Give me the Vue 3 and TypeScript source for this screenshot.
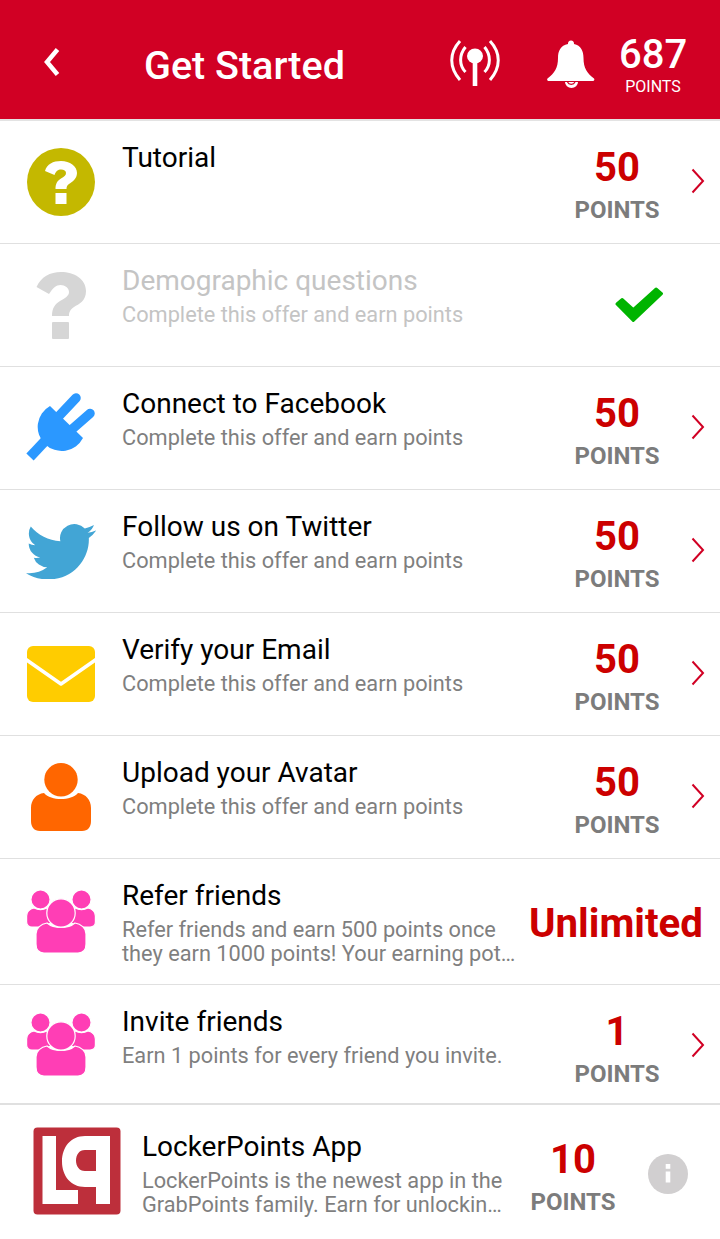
<script setup lang="ts">
type Offer = {
  title: string
  lines?: string[]
  icon: string
  points?: string
  done?: boolean
  wide?: boolean
  tall?: boolean
  short?: boolean
}

const earn = ['Complete this offer and earn points']

const offers: Offer[] = [
  { title: 'Tutorial', icon: 'help', points: '50' },
  { title: 'Demographic questions', lines: earn, icon: 'question', done: true },
  { title: 'Connect to Facebook', lines: earn, icon: 'plug', points: '50' },
  { title: 'Follow us on Twitter', lines: earn, icon: 'twitter', points: '50' },
  { title: 'Verify your Email', lines: earn, icon: 'mail', points: '50' },
  { title: 'Upload your Avatar', lines: earn, icon: 'user', points: '50' },
  {
    title: 'Refer friends',
    lines: ['Refer friends and earn 500 points once', 'they earn 1000 points! Your earning pot…'],
    icon: 'group',
    wide: true,
    tall: true,
  },
  { title: 'Invite friends', lines: ['Earn 1 points for every friend you invite.'], icon: 'group', points: '1', short: true },
]
</script>

<template>
  <div class="page">
    <header class="topbar">
      <svg class="back" width="20" height="30" viewBox="0 0 20 30">
        <path d="M15.500 2.500 L5 15 L15.500 27.500" fill="none" stroke="#fff" stroke-width="4.500" />
      </svg>
      <h1 class="heading">Get Started</h1>
      <svg class="signal" width="50" height="50" viewBox="0 0 50 50">
        <g fill="none" stroke="#fff" stroke-width="3">
          <path d="M10 2 C-1 14 -1 28 10 41" />
          <path d="M15.500 8 C9 16 9 26 15.500 33" />
          <path d="M34.500 8 C41 16 41 26 34.500 33" />
          <path d="M40 2 C51 14 51 28 40 41" />
        </g>
        <ellipse cx="25" cy="17" rx="8" ry="7.500" fill="#fff" />
        <rect x="22.700" y="20" width="4.600" height="27" fill="#fff" />
      </svg>
      <svg class="bell" width="50" height="48" viewBox="0 0 50 48">
        <path
          d="M25 0.500 a3 3 0 0 1 3 3.500 C35 5.500 37.500 11 37.500 18 C37.500 28 41 33 48 38.500 a1.500 1.500 0 0 1 -1 2.500 H2.500 a1.500 1.500 0 0 1 -1 -2.500 C8.500 33 12 28 12 18 C12 11 14.500 5.500 22 4 A3 3 0 0 1 25 0.500 Z"
          fill="#fff"
        />
        <path d="M19 42 a6.500 6 0 0 0 13 0 Z" fill="#fff" />
        <path d="M21.500 42 a4 3.500 0 0 0 7.500 0" fill="none" stroke="#d10024" stroke-width="1.200" />
      </svg>
      <div class="balance">
        <div class="balance-num">687</div>
        <div class="balance-label">POINTS</div>
      </div>
    </header>

    <ul class="list">
      <li
        v-for="offer in offers"
        :key="offer.title"
        class="row"
        :class="{ done: offer.done, tall: offer.tall, short: offer.short }"
      >
        <div class="icon">
          <svg v-if="offer.icon === 'help'" width="70" height="70" viewBox="0 0 70 70">
            <circle cx="35" cy="35" r="34" fill="#c4b800" />
            <path
              d="M19 24 C21 17 27 14 35 14 C44 14 51 19 51 26 C51 32 46 35 43 37 C41 38.500 40.500 39.500 40.500 42 H29.500 C29.500 37 31 34 35 31.500 C38 29.500 40 28.500 40 26 C40 24 38 22.500 35 22.500 C32 22.500 30 24 28.500 28 Z"
              fill="#fff"
            />
            <rect x="29.500" y="46" width="11" height="11" fill="#fff" />
          </svg>
          <svg v-else-if="offer.icon === 'question'" width="70" height="70" viewBox="0 0 70 70">
            <path
              d="M10.500 17 C15 7 24 2 35 2 C48 2 60 9 60 21 C60 31 53 34 48 37 C44 40 43 42 43 46 H26 C26 38 29 34 34 31 C39 28 43 26 43 22 C43 18 39 15 34.500 15 C30 15 27 18 23 24 Z"
              fill="#d6d6d6"
            />
            <rect x="26" y="52" width="17" height="17" rx="1" fill="#d6d6d6" />
          </svg>
          <svg v-else-if="offer.icon === 'plug'" width="70" height="70" viewBox="0 0 70 70">
            <g fill="none" stroke="#2b98ff">
              <path d="M50 5 L33 23" stroke-width="9.500" stroke-linecap="round" />
              <path d="M64 20.500 L44 38" stroke-width="9.500" stroke-linecap="round" />
              <path d="M20 47 L4 64" stroke-width="10" />
            </g>
            <path d="M24 13 L57 45 A24 24 0 1 1 24 13 Z" fill="#2b98ff" />
          </svg>
          <svg v-else-if="offer.icon === 'twitter'" class="bird" width="70" height="56" viewBox="0 1.900 24 19.700" preserveAspectRatio="none">
            <path
              d="M23.953 4.570a10 10 0 01-2.825.775 4.958 4.958 0 002.163-2.723c-.951.555-2.005.959-3.127 1.184a4.920 4.920 0 00-8.384 4.482C7.690 8.095 4.067 6.130 1.640 3.162a4.822 4.822 0 00-.666 2.475c0 1.710.870 3.213 2.188 4.096a4.904 4.904 0 01-2.228-.616v.060a4.923 4.923 0 003.946 4.827 4.996 4.996 0 01-2.212.085 4.936 4.936 0 004.604 3.417 9.867 9.867 0 01-6.102 2.105c-.390 0-.779-.023-1.170-.067a13.995 13.995 0 007.557 2.209c9.053 0 13.998-7.496 13.998-13.985 0-.210 0-.420-.015-.630A9.935 9.935 0 0024 4.590z"
              fill="#42a5d5"
            />
          </svg>
          <svg v-else-if="offer.icon === 'mail'" width="70" height="56" viewBox="0 0 70 56">
            <rect x="1" y="0" width="68" height="56" rx="6" fill="#ffcc00" />
            <path d="M0 13.500 L35 38 L70 13.500" fill="none" stroke="#fff" stroke-width="3.500" stroke-linejoin="round" />
          </svg>
          <svg v-else-if="offer.icon === 'user'" width="60" height="68" viewBox="0 0 60 68">
            <circle cx="30" cy="16.700" r="16.700" fill="#ff6600" />
            <path
              d="M13 30 C20 38 40 38 47 30 C55 31 60 37 60 45 V58 C60 64 57 68 51 68 H9 C3 68 0 64 0 58 V45 C0 37 5 31 13 30 Z"
              fill="#ff6600"
            />
          </svg>
          <svg v-else-if="offer.icon === 'group'" width="70" height="63" viewBox="0 0 70 63">
            <g fill="#ff3eb5" stroke="#fff" stroke-width="1.200">
              <path d="M8 18 C12 20 17 20 21 18 L28 32 L14 37 H6 C3 37 0.600 35 0.600 32 V26 C0.600 22 4 19 8 18 Z" />
              <path d="M62 18 C58 20 53 20 49 18 L42 32 L56 37 H64 C67 37 69.400 35 69.400 32 V26 C69.400 22 66 19 62 18 Z" />
              <circle cx="14.500" cy="9.500" r="9.600" />
              <circle cx="55.500" cy="9.500" r="9.600" />
              <path d="M21 33 C28 39 42 39 49 33 C55 34 60 38 60 44 V54 C60 60 57 63 52 63 H18 C13 63 10 60 10 54 V44 C10 38 15 34 21 33 Z" />
              <circle cx="35" cy="23" r="14.200" />
            </g>
          </svg>
        </div>

        <div class="text">
          <div class="title">{{ offer.title }}</div>
          <div class="desc-block">
            <div v-for="line in offer.lines" :key="line" class="desc">{{ line }}</div>
          </div>
        </div>

        <div v-if="offer.wide" class="unlimited">Unlimited</div>
        <svg v-else-if="offer.done" class="check" width="50" height="38" viewBox="0 0 50 38">
          <polygon
            points="2,18 7.300,13.500 18.300,23.500 41,3 46.500,7.600 18.300,34.500"
            fill="#00b400"
            stroke="#00b400"
            stroke-width="3"
            stroke-linejoin="round"
          />
        </svg>
        <template v-else>
          <div class="reward">
            <div class="reward-num">{{ offer.points }}</div>
            <div class="reward-label">POINTS</div>
          </div>
          <svg class="chevron" width="14" height="26" viewBox="0 0 14 26">
            <path d="M1.500 1.500 L12 13 L1.500 24.500" fill="none" stroke="#d10024" stroke-width="2" />
          </svg>
        </template>
      </li>
    </ul>

    <section class="promo">
      <svg class="logo" width="88" height="88" viewBox="0 0 88 88">
        <rect x="0.500" y="0.500" width="87" height="87" rx="4" fill="#bd2f3b" />
        <path d="M9.500 9 H23 V63 H45 V77 H9.500 Z" fill="#fff" />
        <path
          d="M77 9 V77 H63 V60 H52 C38 60 29 49 29 34.500 C29 20 38 9 52 9 Z M63 23 H52 C46 23 43 28 43 33.500 C43 39 46 44 52 44 H63 Z"
          fill="#fff"
          fill-rule="evenodd"
        />
      </svg>
      <div class="promo-text">
        <div class="title">LockerPoints App</div>
        <div class="desc-block">
          <div class="desc">LockerPoints is the newest app in the</div>
          <div class="desc">GrabPoints family. Earn for unlockin…</div>
        </div>
      </div>
      <div class="reward">
        <div class="reward-num">10</div>
        <div class="reward-label">POINTS</div>
      </div>
      <svg class="info" width="40" height="40" viewBox="0 0 40 40">
        <circle cx="20" cy="20" r="20" fill="#d1cfd0" />
        <rect x="17.700" y="10" width="4.600" height="4.800" fill="#fff" />
        <rect x="17.700" y="17.500" width="4.600" height="11" fill="#fff" />
      </svg>
    </section>
  </div>
</template>

<style scoped>
.page {
  width: 720px;
  height: 1239px;
  overflow: hidden;
  background: #fff;
  font-family: Roboto, "Liberation Sans", sans-serif;
}

.topbar {
  height: 119px;
  display: flex;
  align-items: center;
  background: #d10024;
  color: #fff;
  border-bottom: 2px solid #e3e3e3;
}

.back {
  margin: 5px 0 0 42px;
  flex: none;
}

.heading {
  margin: 11px 0 0 82px;
  width: 306px;
  flex: none;
  font-size: 39.500px;
  font-weight: 500;
  white-space: nowrap;
}

.signal {
  margin-top: 8px;
  flex: none;
}

.bell {
  margin: 8px 0 0 46px;
  flex: none;
}

.balance {
  margin: 12px 0 0 23px;
  width: 68px;
  text-align: center;
}

.balance-num {
  font-size: 40px;
  font-weight: 500;
  line-height: 40px;
}

.balance-label {
  margin-top: 2px;
  font-size: 16px;
  line-height: 20px;
}

.list {
  list-style: none;
  margin: 0;
  padding: 0;
}

.row {
  height: 122px;
  display: flex;
  align-items: center;
  border-bottom: 1px solid #e0e0e0;
}

.row.tall {
  height: 125px;
}

.row.short {
  height: 118px;
  border-bottom-width: 2px;
}

.icon {
  width: 122px;
  flex: none;
  padding: 0 26px;
  box-sizing: border-box;
  display: flex;
  justify-content: center;
}

.bird {
  margin-left: -1px;
}

.text {
  width: 394px;
  flex: none;
  align-self: flex-start;
  padding-top: 20px;
}

.title {
  font-size: 28px;
  line-height: 34px;
  color: #000;
  white-space: nowrap;
}

.desc-block {
  margin-top: 5px;
}

.desc {
  font-size: 21.750px;
  line-height: 24px;
  color: #7f7f7f;
  white-space: nowrap;
}

.done .title,
.done .desc {
  color: #c4c4c4;
}

.reward {
  width: 100px;
  text-align: center;
  flex: none;
}

.row .reward {
  margin: 4px 24px 0 51px;
}

.row.short .reward {
  margin-top: 8px;
}

.reward-num {
  font-size: 40px;
  font-weight: 700;
  line-height: 48px;
  color: #cc0000;
}

.reward-label {
  margin-top: 4px;
  font-size: 24px;
  font-weight: 700;
  line-height: 28px;
  color: #7c7c7c;
}

.chevron {
  flex: none;
  margin-bottom: 2px;
}

.short .chevron {
  margin: 2px 0 0;
}

.check {
  margin-left: 99px;
}

.unlimited {
  margin: 4px 0 0 13px;
  font-size: 40.250px;
  font-weight: 700;
  color: #cc0000;
  white-space: nowrap;
}

.promo {
  height: 133px;
  display: flex;
  align-items: center;
}

.logo {
  margin: -2px 0 0 33px;
  flex: none;
}

.promo-text {
  width: 370px;
  margin: 4px 0 0 21px;
  flex: none;
}

.promo .reward {
  margin: 8px 0 0 11px;
}

.info {
  margin: 4px 0 0 25px;
  flex: none;
}
</style>
